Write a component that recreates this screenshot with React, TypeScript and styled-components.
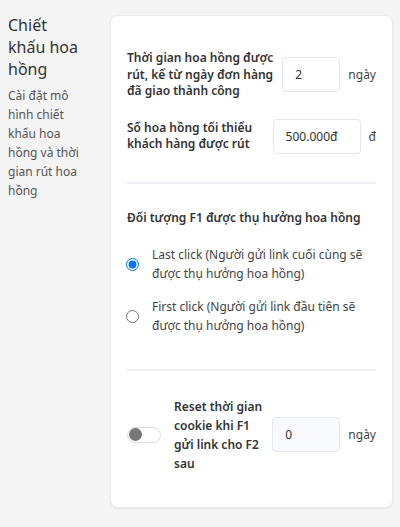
import React, { useState } from "react";
import styled, { createGlobalStyle } from "styled-components";

const GlobalStyle = createGlobalStyle`
  body {
    margin: 0;
    background: #f4f4f4;
    font-family: "Noto Sans", "Open Sans", sans-serif;
    color: #333;
  }
`;

const Page = styled.div`
  display: flex;
  align-items: flex-start;
  padding: 15px 7px 19px 8px;
  gap: 30px;
`;

const Intro = styled.div`
  width: 72px;
  flex-shrink: 0;
  display: flex;
  flex-direction: column;
  gap: 6px;
  margin-top: -1px;
`;

const Title = styled.h2`
  margin: 0;
  font-size: 16px;
  font-weight: 400;
  line-height: 22px;
  color: #333;
`;

const Description = styled.p`
  margin: 0;
  font-size: 12px;
  line-height: 19px;
  color: #555;
`;

const Card = styled.div`
  flex: 1;
  height: 493px;
  box-sizing: border-box;
  background: #fff;
  border: 1px solid #ebebeb;
  border-radius: 8px;
  box-shadow: 0 1px 2px rgba(0, 0, 0, 0.06);
  padding: 0 16px;
`;

const Section = styled.div<{ $top: number; $bottom: number; $gap?: number }>`
  display: flex;
  flex-direction: column;
  gap: ${(p) => p.$gap ?? 0}px;
  padding: ${(p) => p.$top}px 0 ${(p) => p.$bottom}px;
  & + & {
    border-top: 2px solid #eef0f4;
  }
`;

const FieldRow = styled.div`
  display: flex;
  align-items: center;
`;

const FieldLabel = styled.div`
  flex: 1;
  font-size: 12px;
  font-weight: 600;
  line-height: 16.5px;
  color: #333;
  padding-right: 8px;
`;

const Input = styled.input<{ $width: number; $muted?: boolean }>`
  width: ${(p) => p.$width}px;
  height: 35px;
  box-sizing: border-box;
  border: 1px solid #e4e7ec;
  border-radius: 4px;
  background: ${(p) => (p.$muted ? "#f7f9fc" : "#fff")};
  padding: 0 12px;
  font-family: inherit;
  font-size: 12px;
  color: #333;
  outline: none;
`;

const Unit = styled.span`
  margin-left: 8px;
  font-size: 12px;
  color: #444;
`;

const Heading = styled.div`
  font-size: 12px;
  font-weight: 600;
  line-height: 18px;
  color: #333;
`;

const RadioList = styled.div`
  display: flex;
  flex-direction: column;
  gap: 13px;
`;

const RadioOption = styled.label`
  display: flex;
  align-items: center;
  gap: 13px;
  cursor: pointer;
`;

const RadioInput = styled.input`
  width: 13px;
  height: 13px;
  margin: 0 0 0 -1px;
  flex-shrink: 0;
`;

const RadioText = styled.span`
  font-size: 12px;
  line-height: 19.5px;
  color: #444;
`;

const ToggleRow = styled.div`
  display: flex;
  align-items: center;
`;

const Toggle = styled.button<{ $on: boolean }>`
  width: 34px;
  height: 16px;
  flex-shrink: 0;
  box-sizing: border-box;
  border: 1px solid #dcdcdc;
  border-radius: 8px;
  background: ${(p) => (p.$on ? "#1a73e8" : "#fff")};
  padding: 0 0 0 1px;
  display: flex;
  align-items: center;
  justify-content: ${(p) => (p.$on ? "flex-end" : "flex-start")};
  cursor: pointer;
`;

const Knob = styled.span<{ $on: boolean }>`
  width: 13px;
  height: 13px;
  border-radius: 50%;
  background: ${(p) => (p.$on ? "#fff" : "#777")};
`;

const ToggleLabel = styled.div`
  flex: 1;
  margin-left: 13px;
  padding-right: 8px;
  font-size: 12px;
  font-weight: 600;
  line-height: 19px;
  color: #333;
`;

const App: React.FC = () => {
  const [choice, setChoice] = useState("last");
  const [reset, setReset] = useState(false);

  return (
    <>
      <GlobalStyle />
      <Page>
        <Intro>
          <Title>Chiết khấu hoa hồng</Title>
          <Description>
            Cài đặt mô hình chiết khấu hoa hồng và thời gian rút hoa hồng
          </Description>
        </Intro>
        <Card>
          <Section $top={34} $bottom={28} $gap={19}>
            <FieldRow>
              <FieldLabel>
                Thời gian hoa hồng được rút, kể từ ngày đơn hàng đã giao thành
                công
              </FieldLabel>
              <Input $width={58} defaultValue="2" />
              <Unit>ngày</Unit>
            </FieldRow>
            <FieldRow>
              <FieldLabel>Số hoa hồng tối thiểu khách hàng được rút</FieldLabel>
              <Input $width={88} defaultValue="500.000đ" />
              <Unit>đ</Unit>
            </FieldRow>
          </Section>
          <Section $top={25} $bottom={33} $gap={18}>
            <Heading>Đối tượng F1 được thụ hưởng hoa hồng</Heading>
            <RadioList>
              <RadioOption>
                <RadioInput
                  type="radio"
                  name="f1"
                  checked={choice === "last"}
                  onChange={() => setChoice("last")}
                />
                <RadioText>
                  Last click (Người gửi link cuối cùng sẽ được thụ hưởng hoa
                  hồng)
                </RadioText>
              </RadioOption>
              <RadioOption>
                <RadioInput
                  type="radio"
                  name="f1"
                  checked={choice === "first"}
                  onChange={() => setChoice("first")}
                />
                <RadioText>
                  First click (Người gửi link đầu tiên sẽ được thụ hưởng hoa
                  hồng)
                </RadioText>
              </RadioOption>
            </RadioList>
          </Section>
          <Section $top={26} $bottom={0}>
            <ToggleRow>
              <Toggle $on={reset} onClick={() => setReset(!reset)}>
                <Knob $on={reset} />
              </Toggle>
              <ToggleLabel>
                Reset thời gian cookie khi F1 gửi link cho F2 sau
              </ToggleLabel>
              <Input $width={68} $muted defaultValue="0" />
              <Unit>ngày</Unit>
            </ToggleRow>
          </Section>
        </Card>
      </Page>
    </>
  );
};

export default App;
